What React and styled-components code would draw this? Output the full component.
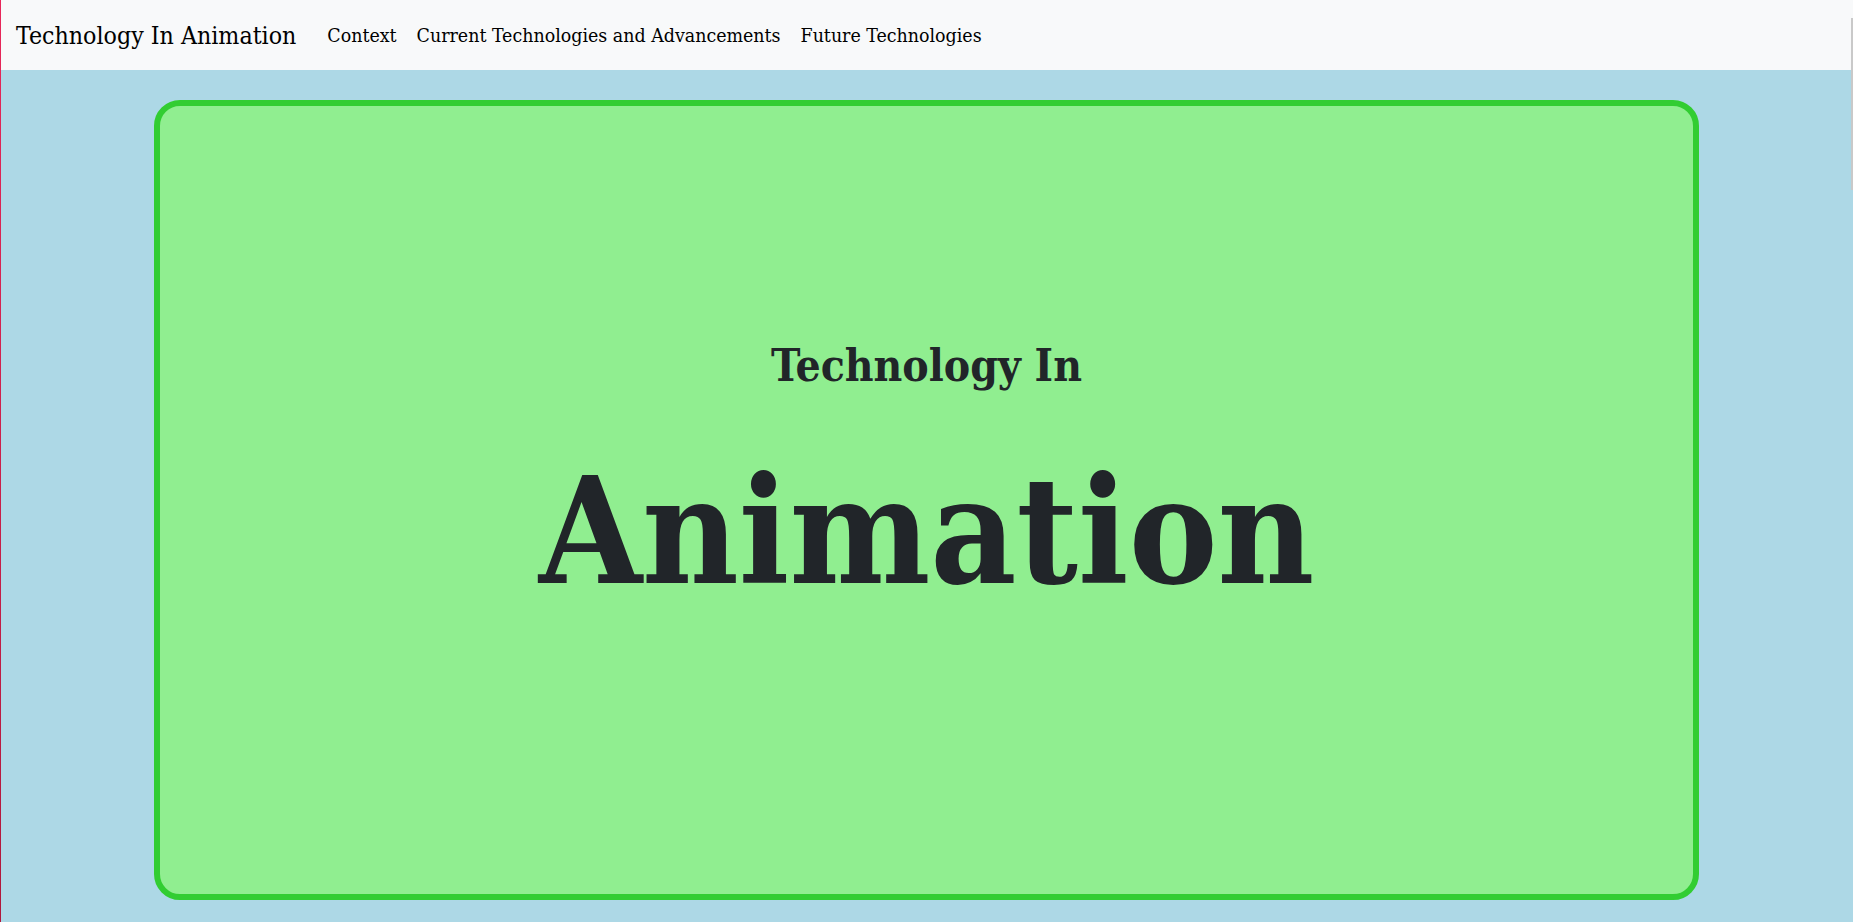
import React from 'react'
import styled, { createGlobalStyle } from 'styled-components'

const GlobalStyle = createGlobalStyle`
  html, body {
    margin: 0;
    padding: 0;
  }
  body {
    background: #add8e6;
    color: #212529;
    font-family: "DejaVu Serif", "Liberation Serif", serif;
    font-stretch: semi-condensed;
  }
`

const Page = styled.div`
  min-height: 100vh;
  position: relative;
  background: #add8e6;
`

const EdgeLine = styled.div`
  position: fixed;
  top: 0;
  left: 0;
  bottom: 0;
  width: 1px;
  background: linear-gradient(#e8275a, #b0183c);
  z-index: 5;
`

const ScrollThumb = styled.div`
  position: fixed;
  top: 18px;
  right: 0;
  width: 2px;
  height: 172px;
  background: #c9c9c9;
  z-index: 5;
`

const NavBar = styled.nav`
  display: flex;
  align-items: center;
  height: 70px;
  padding: 0 16px;
  background: #f8f9fa;
`

const Brand = styled.a`
  font-size: 24.7px;
  color: #000;
  text-decoration: none;
  margin-right: 23px;
  white-space: nowrap;
`

const NavLinks = styled.ul`
  display: flex;
  list-style: none;
  margin: 0;
  padding: 0;
`

const NavLink = styled.a`
  display: block;
  padding: 0 8px;
  margin-right: 4px;
  font-size: 19.4px;
  color: #000;
  text-decoration: none;
  white-space: nowrap;
`

const Main = styled.main`
  padding: 30px 0 23px;
`

const Card = styled.section`
  box-sizing: border-box;
  width: 83.33%;
  height: 800px;
  margin: 0 auto;
  border: 6px solid #32cd32;
  border-radius: 26px;
  background: #90ee90;
  display: flex;
  flex-direction: column;
  align-items: center;
  justify-content: center;
  padding-bottom: 40px;
`

const Kicker = styled.h2`
  margin: 0;
  font-size: 44px;
  font-weight: 700;
  line-height: 1.2;
  color: #212529;
`

const Headline = styled.h1`
  margin: 50px 0 0;
  font-size: 148px;
  font-weight: 700;
  line-height: 1.2;
  color: #212529;
`

const links = ['Context', 'Current Technologies and Advancements', 'Future Technologies']

const App = () => (
  <Page>
    <GlobalStyle />
    <EdgeLine />
    <ScrollThumb />
    <NavBar>
      <Brand href="#">Technology In Animation</Brand>
      <NavLinks>
        {links.map((label) =>
          <li key={label}><NavLink href="#">{label}</NavLink></li>
        )}
      </NavLinks>
    </NavBar>
    <Main>
      <Card>
        <Kicker>Technology In</Kicker>
        <Headline>Animation</Headline>
      </Card>
    </Main>
  </Page>
)

export default App
